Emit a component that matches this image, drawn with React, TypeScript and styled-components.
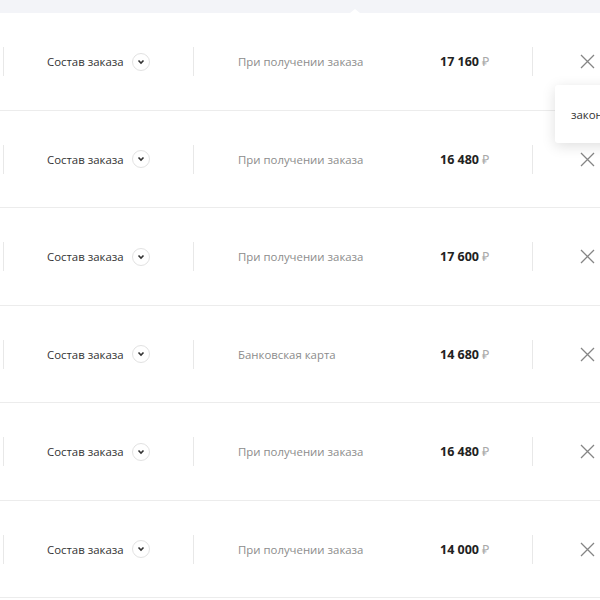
import React from "react";
import styled, { createGlobalStyle } from "styled-components";

type Order = {
  id: number;
  payment: string;
  price: string;
};

const orders: Order[] = [
  { id: 1, payment: "При получении заказа", price: "17 160" },
  { id: 2, payment: "При получении заказа", price: "16 480" },
  { id: 3, payment: "При получении заказа", price: "17 600" },
  { id: 4, payment: "Банковская карта", price: "14 680" },
  { id: 5, payment: "При получении заказа", price: "16 480" },
  { id: 6, payment: "При получении заказа", price: "14 000" },
];

const GlobalStyle = createGlobalStyle`
  html, body {
    margin: 0;
    padding: 0;
    background: #ffffff;
    overflow: hidden;
  }
  body {
    font-family: "Open Sans", "Liberation Sans", sans-serif;
    color: #333333;
  }
`;

const Page = styled.div`
  position: relative;
  width: 600px;
  height: 600px;
  overflow: hidden;
`;

const TopBand = styled.div`
  position: relative;
  height: 13px;
  background: #f3f4f8;

  &::after {
    content: "";
    position: absolute;
    left: 350px;
    bottom: 0;
    border-left: 5px solid transparent;
    border-right: 5px solid transparent;
    border-bottom: 4px solid #ffffff;
  }
`;

const List = styled.div`
  display: flex;
  flex-direction: column;
`;

const Row = styled.div`
  display: flex;
  align-items: center;
  height: 97.5px;
  padding-top: 1px;
  box-sizing: border-box;
  border-bottom: 1px solid #ececec;
`;

const Cell = styled.div<{ $width: number }>`
  display: flex;
  align-items: center;
  flex: 0 0 ${(p) => p.$width}px;
  height: 29px;
  box-sizing: border-box;
  border-right: 1px solid #e8e8e8;
`;

const CompositionCell = styled(Cell)`
  padding-left: 43px;
  gap: 8px;
`;

const PaymentCell = styled(Cell)`
  padding: 0 43px 0 44px;
  justify-content: space-between;
`;

const CloseCell = styled.div`
  flex: 1;
  display: flex;
  align-items: center;
  padding-left: 47px;
`;

const Label = styled.span`
  font-size: 11.4px;
  color: #333333;
  white-space: nowrap;
`;

const Payment = styled.span`
  font-size: 11.4px;
  color: #8c8c8c;
  white-space: nowrap;
`;

const Price = styled.span`
  font-size: 12.5px;
  font-weight: 700;
  color: #222222;
  white-space: nowrap;
`;

const Ruble = styled.span`
  font-weight: 400;
  color: #a8a8a8;
  margin-left: 3px;
`;

const ToggleButton = styled.button`
  display: flex;
  align-items: center;
  justify-content: center;
  width: 18px;
  height: 18px;
  padding: 0;
  border: 1px solid #e2e2e2;
  border-radius: 50%;
  background: #ffffff;
  cursor: pointer;
`;

const CloseButton = styled.button`
  display: flex;
  padding: 0;
  border: none;
  background: none;
  cursor: pointer;
`;

const Popover = styled.div`
  position: absolute;
  left: 555px;
  top: 85px;
  width: 120px;
  height: 58px;
  display: flex;
  align-items: center;
  padding-left: 16px;
  box-sizing: border-box;
  background: #ffffff;
  border-radius: 3px;
  box-shadow: 0 3px 14px rgba(0, 0, 0, 0.13);
  font-size: 11.4px;
  color: #333333;
  white-space: nowrap;
`;

const Chevron = () => (
  <svg width="8" height="6" viewBox="0 0 8 6">
    <path d="M1.5 1.5 L4 4 L6.5 1.5" fill="none" stroke="#333" strokeWidth="1.6" />
  </svg>
);

const CrossIcon = () => (
  <svg width="15" height="15" viewBox="0 0 15 15">
    <path d="M1 1 L14 14 M14 1 L1 14" stroke="#858585" strokeWidth="1.3" fill="none" />
  </svg>
);

const App: React.FC = () => {
  return (
    <Page>
      <GlobalStyle />
      <TopBand />
      <List>
        {orders.map((order) => (
          <Row key={order.id}>
            <Cell $width={4} />
            <CompositionCell $width={190}>
              <Label>Состав заказа</Label>
              <ToggleButton>
                <Chevron />
              </ToggleButton>
            </CompositionCell>
            <PaymentCell $width={339}>
              <Payment>{order.payment}</Payment>
              <Price>
                {order.price}
                <Ruble>₽</Ruble>
              </Price>
            </PaymentCell>
            <CloseCell>
              <CloseButton>
                <CrossIcon />
              </CloseButton>
            </CloseCell>
          </Row>
        ))}
      </List>
      <Popover>законченный</Popover>
    </Page>
  );
};

export default App;
